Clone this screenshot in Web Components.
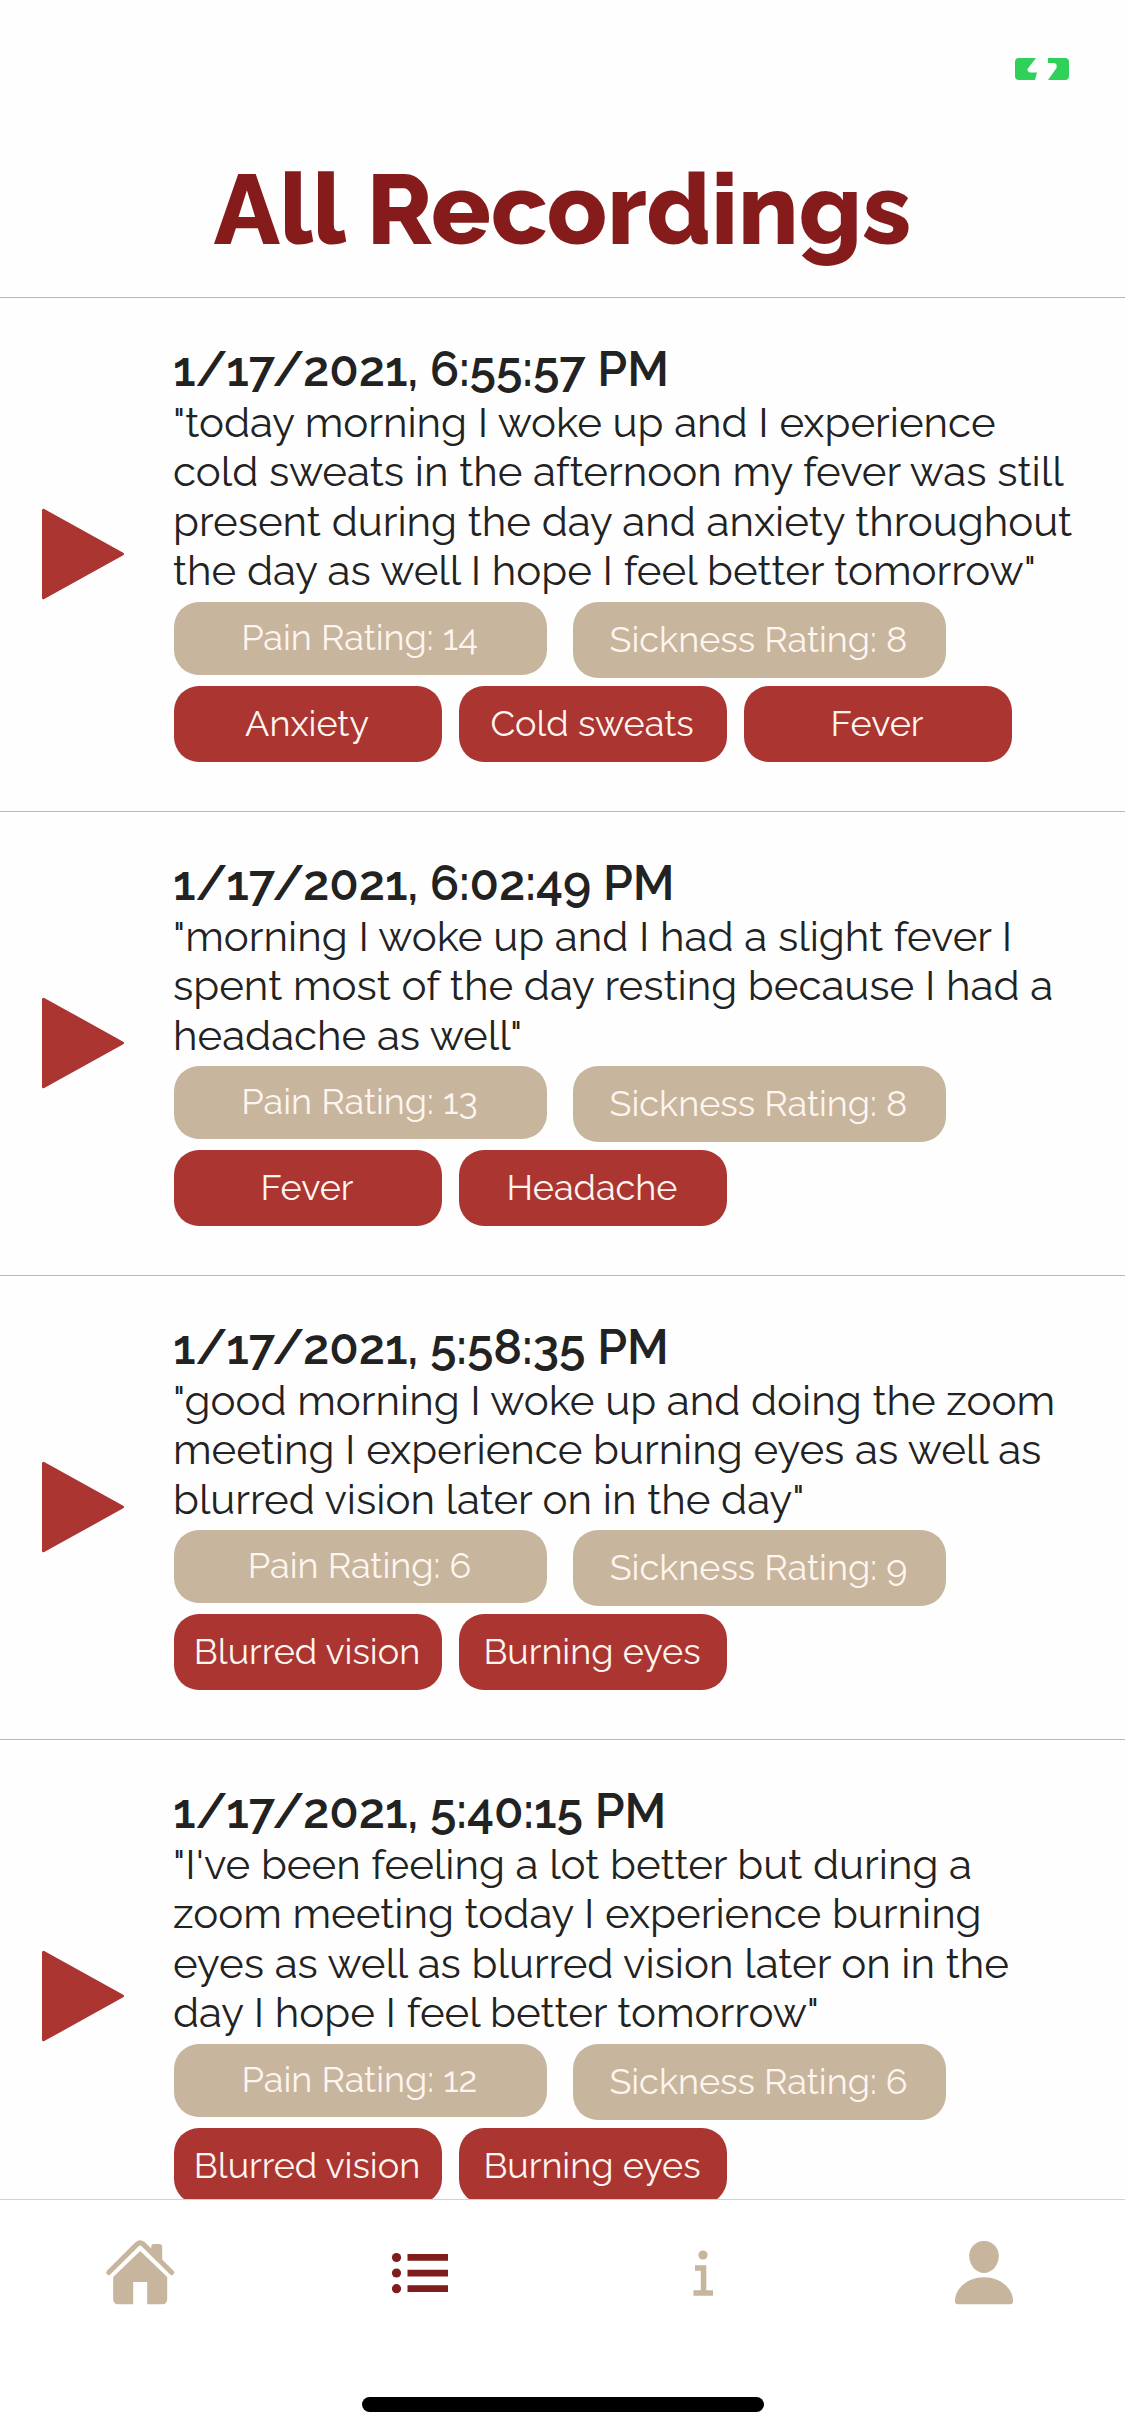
<!DOCTYPE html>
<html lang="en">
<head>
<meta charset="utf-8">
<title>All Recordings</title>
<style>
html,body{margin:0;padding:0;background:#fefefe}
body{width:1125px;height:2436px;overflow:hidden;font-family:Raleway,Lato,"Open Sans",sans-serif;color:#222}
</style>
</head>
<body>
<recordings-app></recordings-app>
<script>
function define(name, html) {
  customElements.define(name, class extends HTMLElement {
    connectedCallback() {
      if (this.shadowRoot) return;
      const root = this.attachShadow({ mode: 'open' });
      const t = document.createElement('template');
      t.innerHTML = typeof html === 'function' ? html(this) : html;
      root.append(t.content.cloneNode(true));
    }
  });
}

define('text-line', `<style>
  :host{display:block;white-space:nowrap}
</style><slot></slot>`);

define('status-bar', `<style>
  :host{display:flex;justify-content:flex-end;box-sizing:border-box;height:138px;padding:58px 56px 0 0}
</style>
<svg width="54" height="22" viewBox="0 0 54 22" fill="#30d158"><path d="M4 0H21L12.5 11Q12 14 15 14.500H22L20 22H4Q0 22 0 18V4Q0 0 4 0Z"/><path d="M33 0H50Q54 0 54 4V18Q54 22 50 22H33L41.500 10Q42.500 5.500 39 5H33Z"/></svg>`);

define('page-title', `<style>
  :host{display:flex;justify-content:center;box-sizing:border-box;height:160px;padding-top:12px;border-bottom:1px solid #b5b5b8;color:#851b1b;font-size:99px;font-weight:800;line-height:118px}
</style><text-line><slot></slot></text-line>`);

define('tag-pill', `<style>
  :host{display:flex;justify-content:center;box-sizing:border-box;width:268px;height:76px;border-radius:25px;background:#aa3531;color:#fff5f0;font-size:36px;font-weight:400;line-height:44px;padding:15px 2px 0 0}
  :host([kind=pain]),:host([kind=sickness]){width:373px;background:#c7b59d}
  :host([kind=pain]){height:73px;padding-top:13px}
</style><slot></slot>`);

define('play-button', `<style>:host{display:flex;align-items:center;box-sizing:border-box;width:172px;padding:0 0 2px 42px}</style>
<svg width="83" height="92" viewBox="0 0 83 92"><path d="M1.500 2.200L80.500 46L1.500 89.800Z" fill="#aa3531" stroke="#aa3531" stroke-width="3" stroke-linejoin="round"/></svg>`);

define('recording-item', `<style>
  :host{display:flex;border-bottom:1px solid #b9b9bc;flex:none}
  .body{padding:42px 0 49px}
  .date{font-size:48px;font-weight:600;line-height:58px;height:58px;letter-spacing:-0.070px}
  .quote{font-size:42px;font-weight:400;line-height:49.330px;height:154px}
  :host([lines="4"]) .quote{height:204px}
  .date,.quote{margin-left:1px}
  .row{display:flex;align-items:flex-start;margin-left:2px}
  .ratings{gap:26px;height:76px}
  .tags{gap:17px;margin-top:8px}
</style>
<play-button></play-button>
<div class="body"><div class="date"><slot name="date"></slot></div><div class="quote"><slot></slot></div>
<div class="row ratings"><slot name="rating"></slot></div><div class="row tags"><slot name="tag"></slot></div></div>`);

define('tab-bar', `<style>
  :host{display:flex;flex-direction:column;align-items:center;height:236px;flex:none;border-top:1px solid #d2d2d4;background:#fff;color:#c7b59d}
  nav{display:flex;align-self:stretch;height:197px;box-sizing:border-box;padding-top:37px}
  nav div{flex:1;display:flex;justify-content:center}
  svg{fill:currentColor;display:block}
  .active{color:#7f1d1c}
  .home{width:402px;height:15px;border-radius:8px;background:#000}
</style>
<nav>
<div><svg width="72" height="72" viewBox="0.8 0 72 72"><path d="M47 10Q47 7 50 7H55Q58 7 58 10V28L47 18Z"/><path d="M4.500 35.500L33 7.200Q36 4.600 39 7.200L67.500 35.500" fill="none" stroke="currentColor" stroke-width="5" stroke-linecap="round"/><path d="M36 14L63 40V62Q63 67.300 58 67.300H43V45H29V67.300H14Q9 67.300 9 62V40Z"/></svg></div>
<div class="active"><svg width="72" height="72" viewBox="0 0 72 72"><circle cx="10.500" cy="20.500" r="4.600"/><circle cx="10.500" cy="36" r="4.600"/><circle cx="10.500" cy="51.700" r="4.600"/><path d="M21.500 17H62V23.700H21.500ZM21.500 32.700H62V39.400H21.500ZM21.500 48.300H62V55H21.500Z"/></svg></div>
<div><svg width="72" height="72" viewBox="0 0 72 72"><circle cx="36" cy="18" r="4.600"/><path d="M28 28.300H39.300V53.300H46V58.700H26.500V53.300H33.800V33.700H28Z"/></svg></div>
<div><svg width="72" height="72" viewBox="0 0 72 72"><path d="M36 4C45 4 50.800 11 50.800 19C50.800 28 44 36 36 36C28 36 21.200 28 21.200 19C21.200 11 27 4 36 4Z"/><path d="M36 40.300C53 40.300 65 52 65 64Q65 67.300 62 67.300H10Q7 67.300 7 64C7 52 19 40.300 36 40.300Z"/></svg></div>
</nav><div class="home"></div>`);

const records = [
  ['1/17/2021, 6:55:57 PM', ['"today morning I woke up and I experience', 'cold sweats in the afternoon my fever was still', 'present during the day and anxiety throughout', 'the day as well I hope I feel better tomorrow"'], 14, 8, ['Anxiety', 'Cold sweats', 'Fever']],
  ['1/17/2021, 6:02:49 PM', ['"morning I woke up and I had a slight fever I', 'spent most of the day resting because I had a', 'headache as well"'], 13, 8, ['Fever', 'Headache']],
  ['1/17/2021, 5:58:35 PM', ['"good morning I woke up and doing the zoom', 'meeting I experience burning eyes as well as', 'blurred vision later on in the day"'], 6, 9, ['Blurred vision', 'Burning eyes']],
  ['1/17/2021, 5:40:15 PM', ['"I\'ve been feeling a lot better but during a', 'zoom meeting today I experience burning', 'eyes as well as blurred vision later on in the', 'day I hope I feel better tomorrow"'], 12, 6, ['Blurred vision', 'Burning eyes']]
];
const line = (t, attr = '') => `<text-line ${attr}>${t}</text-line>`;

define('recordings-app', () => `<style>
  :host{display:flex;flex-direction:column;width:1125px;height:2436px}
  main{flex:1;min-height:0;overflow:hidden;display:flex;flex-direction:column}
</style>
<status-bar></status-bar><page-title>All Recordings</page-title><main>` +
records.map(([d, q, p, s, tags]) => `<recording-item lines="${q.length}">${line(d, 'slot="date"')}${q.map(l => line(l)).join('')}
<tag-pill slot="rating" kind="pain">${line('Pain Rating: ' + p)}</tag-pill><tag-pill slot="rating" kind="sickness">${line('Sickness Rating: ' + s)}</tag-pill>
${tags.map(t => `<tag-pill slot="tag">${line(t)}</tag-pill>`).join('')}</recording-item>`).join('') +
`</main><tab-bar></tab-bar>`);
</script>
</body>
</html>
